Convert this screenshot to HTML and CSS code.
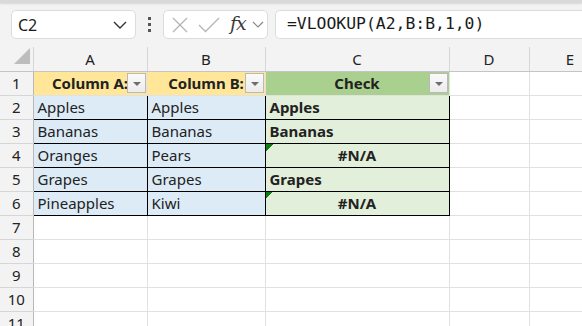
FILE: index.html
```html
<!DOCTYPE html>
<html lang="en">
  <head>
    <meta charset="UTF-8" />
    <title>Book1 - Excel</title>
    <link rel="stylesheet" href="styles.css">
  </head>
  <body>
    <div class="ribbon-edge"></div>

    <div class="formula-bar">
      <div class="name-box">
        <span>C2</span>
        <svg width="14" height="8" viewBox="0 0 14 8"><path d="M1 1l6 6 6-6" fill="none" stroke="#333" stroke-width="1.4"/></svg>
      </div>
      <div class="grip">
        <i></i><i></i><i></i>
      </div>
      <div class="fx-buttons">
        <svg width="16" height="16" viewBox="0 0 16 16"><path d="M1 1l14 14M15 1L1 15" stroke="#b4b4b4" stroke-width="1.3"/></svg>
        <svg width="22" height="16" viewBox="0 0 22 16"><path d="M1 8l6.5 6.5L21 1" fill="none" stroke="#b4b4b4" stroke-width="1.3"/></svg>
        <span class="fx">fx</span>
        <svg class="fx-drop" width="12" height="7" viewBox="0 0 12 7"><path d="M1 1l5 5 5-5" fill="none" stroke="#888" stroke-width="1.2"/></svg>
      </div>
      <div class="formula-input">=VLOOKUP(A2,B:B,1,0)</div>
    </div>

    <div class="sheet-wrap">
      <table class="sheet">
        <colgroup>
          <col class="w-rowhead"><col class="w-a"><col class="w-b"><col class="w-c"><col class="w-d"><col class="w-e">
        </colgroup>
        <thead>
          <tr>
            <th class="corner"><span class="corner-mark"></span></th>
            <th>A</th><th>B</th><th>C</th><th>D</th><th>E</th>
          </tr>
        </thead>
        <tbody>
          <tr>
            <th>1</th>
            <td class="hdr hdr-src"><span class="hdr-text">Column A:</span><span class="filter-btn"></span></td>
            <td class="hdr hdr-src"><span class="hdr-text">Column B:</span><span class="filter-btn"></span></td>
            <td class="hdr hdr-check"><span class="hdr-text">Check</span><span class="filter-btn"></span></td>
            <td></td><td></td>
          </tr>
          <tr>
            <th>2</th>
            <td class="src">Apples</td><td class="src">Apples</td>
            <td class="chk">Apples</td><td></td><td></td>
          </tr>
          <tr>
            <th>3</th>
            <td class="src">Bananas</td><td class="src">Bananas</td>
            <td class="chk">Bananas</td><td></td><td></td>
          </tr>
          <tr>
            <th>4</th>
            <td class="src">Oranges</td><td class="src">Pears</td>
            <td class="chk err">#N/A</td><td></td><td></td>
          </tr>
          <tr>
            <th>5</th>
            <td class="src">Grapes</td><td class="src">Grapes</td>
            <td class="chk">Grapes</td><td></td><td></td>
          </tr>
          <tr>
            <th>6</th>
            <td class="src">Pineapples</td><td class="src">Kiwi</td>
            <td class="chk err">#N/A</td><td></td><td></td>
          </tr>
          <tr><th>7</th><td></td><td></td><td></td><td></td><td></td></tr>
          <tr><th>8</th><td></td><td></td><td></td><td></td><td></td></tr>
          <tr><th>9</th><td></td><td></td><td></td><td></td><td></td></tr>
          <tr><th>10</th><td></td><td></td><td></td><td></td><td></td></tr>
          <tr><th>11</th><td></td><td></td><td></td><td></td><td></td></tr>
        </tbody>
      </table>
    </div>
  </body>
</html>
```

FILE: styles.css
```css
body {
  margin: 0;
  font-family: "Noto Sans", sans-serif;
  color: #222;
  background-color: #f3f3f3;
  overflow: hidden;
}
.ribbon-edge {
  height: 3px;
  background-color: #d9d9d9;
  box-shadow: 0 1px 2px rgba(0, 0, 0, 0.12);
}
.formula-bar {
  display: flex;
  align-items: flex-start;
  height: 44px;
  padding: 7px 0 0 11px;
  box-sizing: border-box;
}
.name-box {
  width: 125px;
  height: 29px;
  box-sizing: border-box;
  background-color: white;
  border: 1px solid #dcdcdc;
  border-radius: 5px;
  display: flex;
  align-items: center;
  justify-content: space-between;
  padding: 1px 8px 0 6px;
  font-size: 16px;
  color: #1a1a1a;
}
.grip {
  width: 27px;
  height: 29px;
  display: flex;
  flex-direction: column;
  align-items: center;
  justify-content: center;
  gap: 3px;
}
.grip i {
  width: 3px;
  height: 3px;
  background-color: #555;
}
.fx-buttons {
  width: 105px;
  height: 29px;
  box-sizing: border-box;
  background-color: white;
  border: 1px solid #dcdcdc;
  border-radius: 5px;
  display: flex;
  align-items: center;
  padding-left: 8px;
  gap: 10px;
}
.fx {
  font-family: "DejaVu Serif", serif;
  font-style: italic;
  font-size: 19px;
  color: #3a3a3a;
  letter-spacing: -1px;
  margin-top: -3px;
}
.fx-drop {
  margin-left: -4px;
}
.formula-input {
  flex: 1;
  margin-left: 7px;
  height: 29px;
  box-sizing: border-box;
  background-color: white;
  border: 1px solid #dcdcdc;
  border-right: none;
  border-radius: 5px 0 0 5px;
  padding: 3px 0 0 11px;
  font-family: "DejaVu Sans Mono", monospace;
  font-size: 16.4px;
  color: #1a1a1a;
}

/* the grid keeps going below the window, as in the app */
.sheet-wrap {
  height: 279px;
  overflow: hidden;
  background-color: white;
}
.sheet {
  border-collapse: collapse;
  table-layout: fixed;
  width: 582px;
  background-color: white;
  font-size: 15px;
}
.w-rowhead { width: 33px; }
.w-a { width: 114px; }
.w-b { width: 118px; }
.w-c { width: 184px; }
.w-d { width: 80px; }
.w-e { width: 53px; }
.sheet tr {
  height: 24px;
}
.sheet th {
  font-weight: normal;
  background-color: #f3f3f3;
  color: #222;
  border: 1px solid #d6d6d6;
  padding: 0;
  text-align: center;
}
.sheet thead th {
  border-top: none;
  border-bottom: 1px solid #c4c4c4;
}
.sheet thead th:last-child {
  border-right: none;
  text-align: right;
  padding-right: 8px;
}
.sheet tbody th {
  border-left: none;
  border-right: 1px solid #b8b8b8;
}
.sheet th.corner {
  border-left: none;
  border-right: 1px solid #d6d6d6;
  text-align: right;
  vertical-align: bottom;
}
.corner-mark {
  display: inline-block;
  width: 0;
  height: 0;
  margin: 0 3px 3px 0;
  border-left: 16px solid transparent;
  border-bottom: 16px solid #bdbdbd;
}
.sheet td {
  border: 1px solid #e1e1e1;
  padding: 0 4px;
  white-space: nowrap;
  overflow: hidden;
  line-height: 22px;
}
.sheet td:last-child {
  border-right: none;
}
.hdr {
  position: relative;
  font-weight: bold;
  text-align: center;
  border-color: #000;
}
.hdr-src {
  background-color: #ffe699;
  border-top-color: #e1e1e1;
  border-bottom-color: #9fb6cf;
}
.hdr-check {
  background-color: #a9d08e;
  border-top-color: #e1e1e1;
  border-bottom-color: #000;
}
.filter-btn {
  position: absolute;
  right: 1px;
  top: 1px;
  width: 19px;
  height: 20px;
  box-sizing: border-box;
  border: 1px solid #b9b9b9;
  background: linear-gradient(#fafafa, #ececec);
}
.filter-btn::after {
  content: "";
  position: absolute;
  left: 5px;
  top: 8px;
  border-left: 4px solid transparent;
  border-right: 4px solid transparent;
  border-top: 4px solid #6d6d6d;
}
.src {
  background-color: #ddebf7;
  border-color: #000 !important;
}
.chk {
  background-color: #e2efda;
  border-color: #000 !important;
  font-weight: bold;
}
.err {
  text-align: center;
  background: linear-gradient(to bottom right, #107c10 50%, transparent 50%) no-repeat 0 0 / 7px 7px, #e2efda;
}
```
